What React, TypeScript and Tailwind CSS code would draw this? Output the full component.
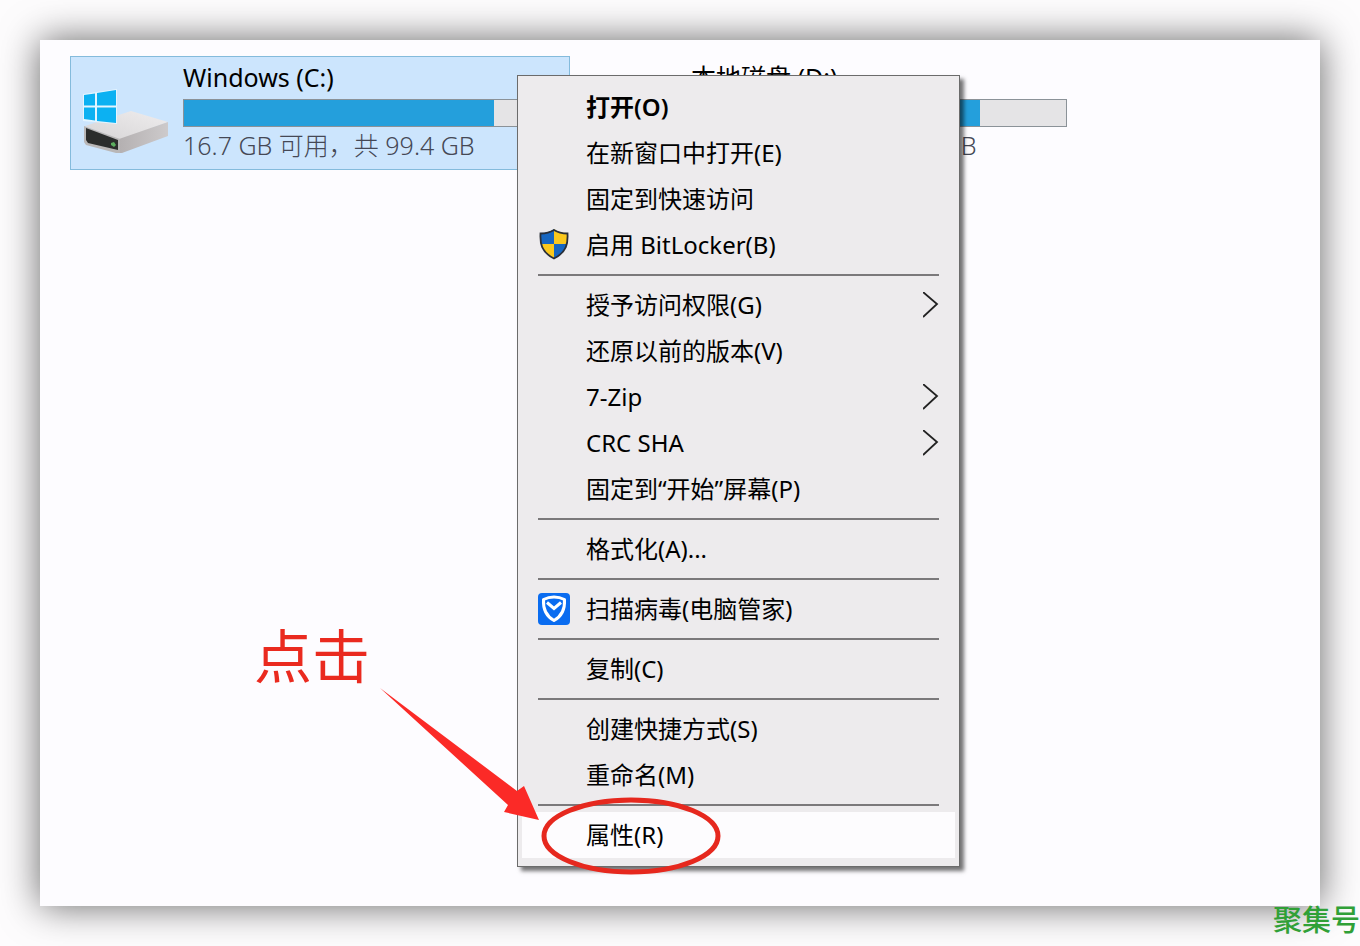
import type { ReactNode } from "react"

const ShieldIcon = () => (
    <svg viewBox="0 0 32 32" className="w-8 h-8" aria-hidden="true">
        <clipPath id="uac">
            <path d="M16 0C12 3 7.500 4 2.500 4C2 14 3 23 16 29.500C29 23 30 14 29.500 4C24.500 4 20 3 16 0Z" />
        </clipPath>
        <g clipPath="url(#uac)">
            <rect x="0" y="0" width="16" height="15" fill="#1766c0" />
            <rect x="16" y="0" width="16" height="15" fill="#fbc81c" />
            <rect x="0" y="15" width="16" height="16" fill="#fbc81c" />
            <rect x="16" y="15" width="16" height="16" fill="#1766c0" />
        </g>
        <path d="M16 1C12 3.500 7.500 4.500 2.500 4.500C2 14 3 23 16 29.500C29 23 30 14 29.500 4.500C24.500 4.500 20 3.500 16 1Z" fill="none" stroke="#2a2f38" strokeWidth="1.800" />
    </svg>
)

const GuardIcon = () => (
    <svg viewBox="0 0 32 32" className="w-8 h-8" aria-hidden="true">
        <rect width="32" height="32" rx="4" fill="#0a6cf0" />
        <path d="M16 4C12 4 8.500 5 5.500 6.500C5 15 7 22.500 16 27.500C25 22.500 27 15 26.500 6.500C23.500 5 20 4 16 4Z" fill="none" stroke="#fff" strokeWidth="3" strokeLinejoin="round" />
        <path d="M9 9.500L16 15.500L23 9.500" fill="none" stroke="#fff" strokeWidth="3" />
    </svg>
)

const Chevron = () => (
    <svg viewBox="0 0 16 26" className="w-4 h-[26px]" aria-hidden="true">
        <path d="M0 0L14 12L0 25" fill="none" stroke="#222" strokeWidth="1.800" />
    </svg>
)

const DriveIcon = () => (
    <svg viewBox="0 0 86 66" className="w-[86px] h-[66px] shrink-0 self-end mb-2" aria-hidden="true">
        <defs>
            <linearGradient id="top" x1="0" y1="1" x2="1" y2="0">
                <stop offset="0" stopColor="#d6d4d5" />
                <stop offset="1" stopColor="#efedee" />
            </linearGradient>
            <linearGradient id="side" x1="0" y1="0" x2="1" y2="0">
                <stop offset="0" stopColor="#b3afb0" />
                <stop offset="1" stopColor="#cdcacb" />
            </linearGradient>
        </defs>
        <path d="M2 37L48 22L85 33L37 51Z" fill="url(#top)" />
        <path d="M36 50L85 33V47L39 64L34 64Z" fill="url(#side)" />
        <path d="M1 37L37 50V64L33 64L3 56L1 53Z" fill="#b9b7b7" />
        <path d="M3 39L35 51V61L5 54L3 51Z" fill="#2b2d2c" />
        <path d="M28 54L31 53L33 56L31 58L28 56Z" fill="#5cae5f" />
        <path d="M0 5L34 0V35L0 32Z" fill="#e4f5ff" />
        <path d="M1 6L12 4.500V16.500H1ZM14 4L33 1V16.500H14ZM1 18.500H12V31.500L1 30ZM14 18.500H33V34L14 32Z" fill="#0cb1f2" />
    </svg>
)

type Item = { label: string; icon?: ReactNode; sub?: boolean; bold?: boolean; active?: boolean }

const groups: Item[][] = [
    [
        { label: "打开(O)", bold: true },
        { label: "在新窗口中打开(E)" },
        { label: "固定到快速访问" },
        { label: "启用 BitLocker(B)", icon: <ShieldIcon /> },
    ],
    [
        { label: "授予访问权限(G)", sub: true },
        { label: "还原以前的版本(V)" },
        { label: "7-Zip", sub: true },
        { label: "CRC SHA", sub: true },
        { label: "固定到“开始”屏幕(P)" },
    ],
    [{ label: "格式化(A)..." }],
    [{ label: "扫描病毒(电脑管家)", icon: <GuardIcon /> }],
    [{ label: "复制(C)" }],
    [{ label: "创建快捷方式(S)" }, { label: "重命名(M)" }],
    [{ label: "属性(R)", active: true }],
]

const MenuItem = ({ item }: { item: Item }) => (
    <button
        role="menuitem"
        className={`w-full h-[46px] flex items-center gap-4 px-4 text-left ${item.active ? "bg-[#fdfcfe]" : ""} ${item.bold ? "font-semibold" : ""}`}
    >
        <span className="w-8 h-8 shrink-0">{item.icon}</span>
        <span className="flex-1 whitespace-nowrap">{item.label}</span>
        {item.sub && <Chevron />}
    </button>
)

const ContextMenu = () => (
    <div
        role="menu"
        className="absolute left-[477px] top-[35px] w-[443px] py-2 px-1 bg-[#edebed] border border-[#6b6b6b] shadow-[4px_4px_4px_rgba(0,0,0,0.55)]"
    >
        {groups.map((group, i) => (
            <div key={i}>
                {i > 0 && <hr className="h-[2px] my-[6px] mx-4 border-0 bg-[#7b797b]" />}
                {group.map((item) => (
                    <MenuItem key={item.label} item={item} />
                ))}
            </div>
        ))}
    </div>
)

type DriveProps = { name: string; info: string; used: number; selected?: boolean }

const Drive = ({ name, info, used, selected }: DriveProps) => (
    <div className={`w-[500px] flex items-center gap-[14px] pl-3 pr-[10px] pt-[2px] pb-[6px] border text-[25px] ${selected ? "bg-[#cce5fd] border-[#84bbdc]" : "border-transparent"}`}>
        {selected ? <DriveIcon /> : <span className="w-[86px] shrink-0" />}
        <div className="flex-1 flex flex-col">
            <p className="leading-9 pb-1 whitespace-nowrap">{name}</p>
            <div
                role="progressbar"
                aria-label={name}
                aria-valuenow={used}
                className="h-7 bg-[#e5e4e6] border border-[#8b9298]"
            >
                <div className="h-full bg-[#249fdc]" style={{ width: `${used}%` }} />
            </div>
            <p className="leading-9 whitespace-nowrap font-light text-[#454855]">{info}</p>
        </div>
    </div>
)

const Marker = () => (
    <>
        <p className="absolute left-[214px] top-[576px] text-[58px] leading-[80px] text-[#ea2a1f]">{"点击"}</p>
        <svg viewBox="0 0 350 200" className="absolute left-[335px] top-[643px] w-[350px] h-[200px] pointer-events-none" aria-hidden="true">
            <path d="M5 5L142 108L149 103L164 137L129 129L133 122Z" fill="#fb2a27" />
            <ellipse cx="256" cy="153" rx="87" ry="36" fill="none" stroke="#e6281e" strokeWidth="5" />
        </svg>
    </>
)

export default function App() {
    return (
        <div lang="zh-CN" className="relative min-h-screen flex p-10 overflow-hidden bg-[#fdfcfd] text-[24px] text-black font-['Noto_Sans','Noto_Sans_CJK_SC',sans-serif]">
            <main className="relative flex-1 bg-[#fdfcff] px-[30px] pt-4 shadow-[0_0_36px_rgba(0,0,0,0.6)]">
                <div className="flex items-start gap-2">
                    <Drive name="Windows (C:)" info="16.7 GB 可用，共 99.4 GB" used={83} selected />
                    <Drive name="本地磁盘 (D:)" info="31.7 GB 可用，共 138 GB" used={77} />
                </div>
                <ContextMenu />
                <Marker />
            </main>
            <p className="absolute right-0 bottom-2 text-[29px] leading-9 font-medium text-[#30a037]">{"聚集号"}</p>
        </div>
    )
}
